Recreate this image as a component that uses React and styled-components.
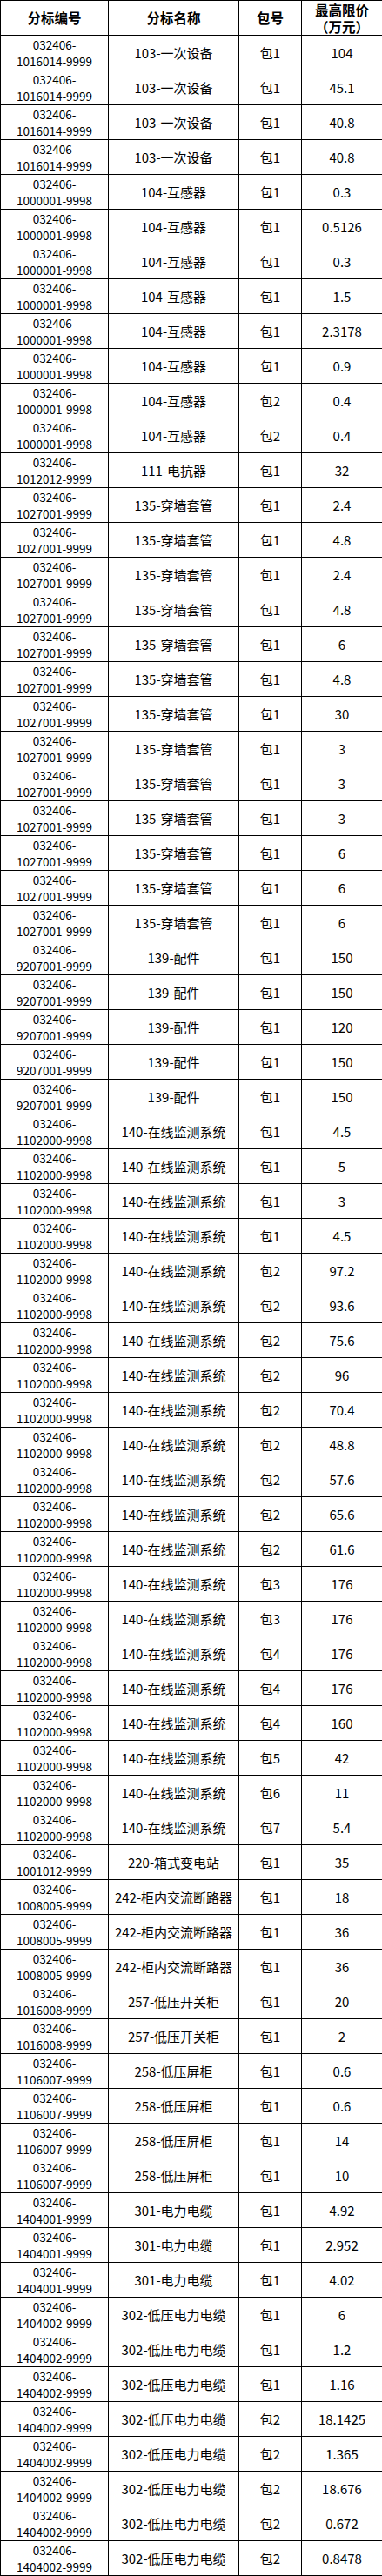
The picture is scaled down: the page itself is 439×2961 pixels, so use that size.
import React from 'react'
import styled, { createGlobalStyle } from 'styled-components'

const GlobalStyle = createGlobalStyle`
  html, body {
    margin: 0;
    padding: 0;
    background: #fff;
  }
  body {
    font-family: "Noto Sans CJK SC", sans-serif;
    color: #000;
  }
`

const Table = styled.table`
  width: 439px;
  border-collapse: collapse;
  table-layout: fixed;
  border: 1px solid #000;
  font-size: 15px;
`

const HeadCell = styled.th`
  height: 39px;
  padding: 0;
  border: 1px solid #000;
  text-align: center;
  vertical-align: middle;
  font-size: 15.5px;
  font-weight: 700;
  line-height: 19px;
`

const Cell = styled.td`
  height: 39px;
  padding: 0;
  border: 1px solid #000;
  text-align: center;
  vertical-align: middle;
  line-height: 19px;
  white-space: nowrap;
`

const CodeCell = styled(Cell)`
  font-size: 13.5px;
`

const Line = styled.span`
  display: block;
`

const rows = [
  ['1016014-9999', '103-一次设备', '包1', '104'],
  ['1016014-9999', '103-一次设备', '包1', '45.1'],
  ['1016014-9999', '103-一次设备', '包1', '40.8'],
  ['1016014-9999', '103-一次设备', '包1', '40.8'],
  ['1000001-9998', '104-互感器', '包1', '0.3'],
  ['1000001-9998', '104-互感器', '包1', '0.5126'],
  ['1000001-9998', '104-互感器', '包1', '0.3'],
  ['1000001-9998', '104-互感器', '包1', '1.5'],
  ['1000001-9998', '104-互感器', '包1', '2.3178'],
  ['1000001-9998', '104-互感器', '包1', '0.9'],
  ['1000001-9998', '104-互感器', '包2', '0.4'],
  ['1000001-9998', '104-互感器', '包2', '0.4'],
  ['1012012-9999', '111-电抗器', '包1', '32'],
  ['1027001-9999', '135-穿墙套管', '包1', '2.4'],
  ['1027001-9999', '135-穿墙套管', '包1', '4.8'],
  ['1027001-9999', '135-穿墙套管', '包1', '2.4'],
  ['1027001-9999', '135-穿墙套管', '包1', '4.8'],
  ['1027001-9999', '135-穿墙套管', '包1', '6'],
  ['1027001-9999', '135-穿墙套管', '包1', '4.8'],
  ['1027001-9999', '135-穿墙套管', '包1', '30'],
  ['1027001-9999', '135-穿墙套管', '包1', '3'],
  ['1027001-9999', '135-穿墙套管', '包1', '3'],
  ['1027001-9999', '135-穿墙套管', '包1', '3'],
  ['1027001-9999', '135-穿墙套管', '包1', '6'],
  ['1027001-9999', '135-穿墙套管', '包1', '6'],
  ['1027001-9999', '135-穿墙套管', '包1', '6'],
  ['9207001-9999', '139-配件', '包1', '150'],
  ['9207001-9999', '139-配件', '包1', '150'],
  ['9207001-9999', '139-配件', '包1', '120'],
  ['9207001-9999', '139-配件', '包1', '150'],
  ['9207001-9999', '139-配件', '包1', '150'],
  ['1102000-9998', '140-在线监测系统', '包1', '4.5'],
  ['1102000-9998', '140-在线监测系统', '包1', '5'],
  ['1102000-9998', '140-在线监测系统', '包1', '3'],
  ['1102000-9998', '140-在线监测系统', '包1', '4.5'],
  ['1102000-9998', '140-在线监测系统', '包2', '97.2'],
  ['1102000-9998', '140-在线监测系统', '包2', '93.6'],
  ['1102000-9998', '140-在线监测系统', '包2', '75.6'],
  ['1102000-9998', '140-在线监测系统', '包2', '96'],
  ['1102000-9998', '140-在线监测系统', '包2', '70.4'],
  ['1102000-9998', '140-在线监测系统', '包2', '48.8'],
  ['1102000-9998', '140-在线监测系统', '包2', '57.6'],
  ['1102000-9998', '140-在线监测系统', '包2', '65.6'],
  ['1102000-9998', '140-在线监测系统', '包2', '61.6'],
  ['1102000-9998', '140-在线监测系统', '包3', '176'],
  ['1102000-9998', '140-在线监测系统', '包3', '176'],
  ['1102000-9998', '140-在线监测系统', '包4', '176'],
  ['1102000-9998', '140-在线监测系统', '包4', '176'],
  ['1102000-9998', '140-在线监测系统', '包4', '160'],
  ['1102000-9998', '140-在线监测系统', '包5', '42'],
  ['1102000-9998', '140-在线监测系统', '包6', '11'],
  ['1102000-9998', '140-在线监测系统', '包7', '5.4'],
  ['1001012-9999', '220-箱式变电站', '包1', '35'],
  ['1008005-9999', '242-柜内交流断路器', '包1', '18'],
  ['1008005-9999', '242-柜内交流断路器', '包1', '36'],
  ['1008005-9999', '242-柜内交流断路器', '包1', '36'],
  ['1016008-9999', '257-低压开关柜', '包1', '20'],
  ['1016008-9999', '257-低压开关柜', '包1', '2'],
  ['1106007-9999', '258-低压屏柜', '包1', '0.6'],
  ['1106007-9999', '258-低压屏柜', '包1', '0.6'],
  ['1106007-9999', '258-低压屏柜', '包1', '14'],
  ['1106007-9999', '258-低压屏柜', '包1', '10'],
  ['1404001-9999', '301-电力电缆', '包1', '4.92'],
  ['1404001-9999', '301-电力电缆', '包1', '2.952'],
  ['1404001-9999', '301-电力电缆', '包1', '4.02'],
  ['1404002-9999', '302-低压电力电缆', '包1', '6'],
  ['1404002-9999', '302-低压电力电缆', '包1', '1.2'],
  ['1404002-9999', '302-低压电力电缆', '包1', '1.16'],
  ['1404002-9999', '302-低压电力电缆', '包2', '18.1425'],
  ['1404002-9999', '302-低压电力电缆', '包2', '1.365'],
  ['1404002-9999', '302-低压电力电缆', '包2', '18.676'],
  ['1404002-9999', '302-低压电力电缆', '包2', '0.672'],
  ['1404002-9999', '302-低压电力电缆', '包2', '0.8478'],
]

export default function App() {
  return (
    <>
      <GlobalStyle />
      <Table>
        <colgroup>
          <col style={{ width: 124 }} />
          <col style={{ width: 150 }} />
          <col style={{ width: 72 }} />
          <col style={{ width: 93 }} />
        </colgroup>
        <thead>
          <tr>
            <HeadCell>分标编号</HeadCell>
            <HeadCell>分标名称</HeadCell>
            <HeadCell>包号</HeadCell>
            <HeadCell>
              <Line>最高限价</Line>
              <Line>（万元）</Line>
            </HeadCell>
          </tr>
        </thead>
        <tbody>
          {rows.map(([code, name, pkg, price], i) => (
            <tr key={i}>
              <CodeCell>
                <Line>032406-</Line>
                <Line>{code}</Line>
              </CodeCell>
              <Cell>{name}</Cell>
              <Cell>{pkg}</Cell>
              <Cell>{price}</Cell>
            </tr>
          ))}
        </tbody>
      </Table>
    </>
  )
}
